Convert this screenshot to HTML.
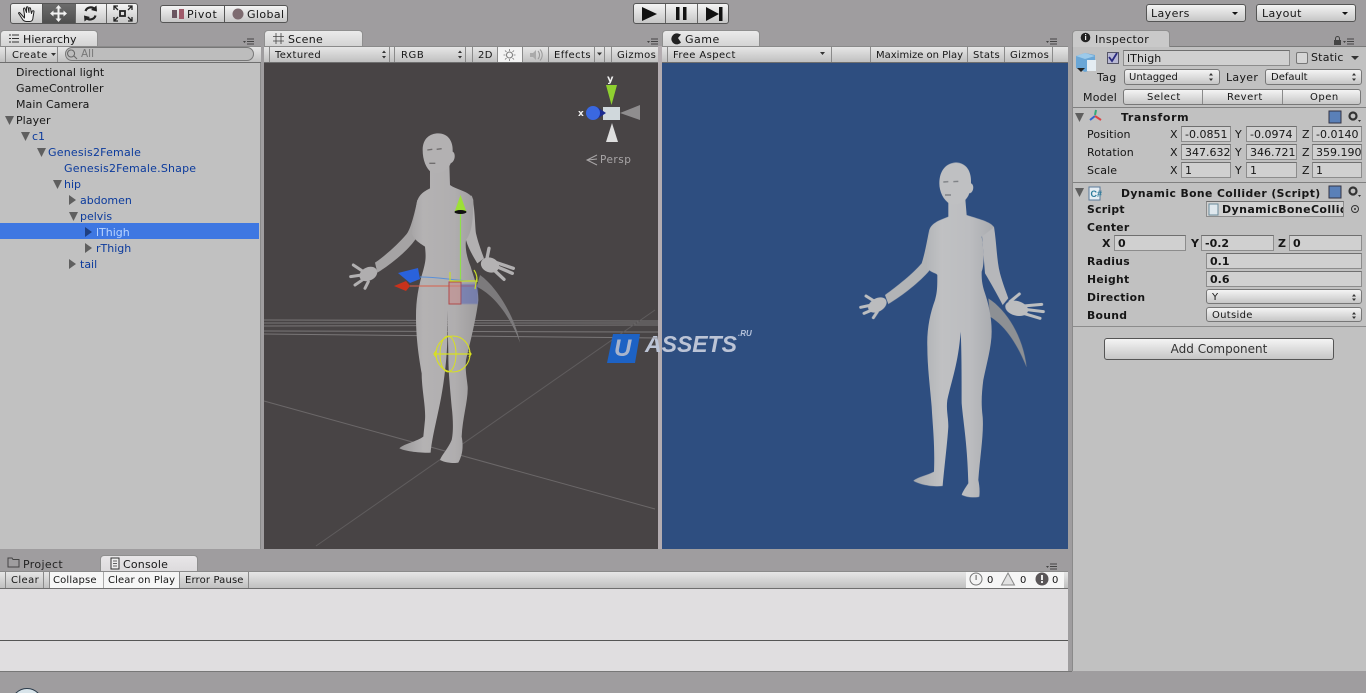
<!DOCTYPE html>
<html><head><meta charset="utf-8"><title>Unity Editor</title>
<style>
html,body{margin:0;padding:0;width:1366px;height:693px;overflow:hidden;background:#9f9d9f}
body{position:relative;font:11px/14px "DejaVu Sans","Liberation Sans",sans-serif;color:#161616}
.a,.t,.f,.b,.tab,.bar{position:absolute;box-sizing:border-box}
.t{white-space:nowrap;margin-top:1px}
.bar{height:17px;background:linear-gradient(#e6e6e6,#c0c0c0);border-bottom:1px solid #6e6e6e;border-top:1px solid #8a8a8a}
.tab{height:17px;border-radius:4px 4px 0 0;background:linear-gradient(#ebebeb,#d2d2d2);border:1px solid #8f8f8f;border-bottom:0}
.b{background:linear-gradient(#f4f4f4,#c6c6c6);border:1px solid #555;border-radius:3px}
.f{background:#d0d0d0;border:1px solid #8c8c8c;border-top-color:#6f6f6f;height:16px;padding-left:3px;padding-top:1px;line-height:14px;white-space:nowrap;overflow:hidden}
.sep{position:absolute;width:1px;background:#8a8a8a}
.blue{color:#0b3a9c}
.bl{font-weight:bold;letter-spacing:.3px}
svg{position:absolute;left:0;top:0}
</style></head><body>

<!-- top toolbar -->
<div class="b" style="left:10px;top:3px;width:128px;height:21px"></div>
<div class="a" style="left:42px;top:4px;width:33px;height:19px;background:linear-gradient(#6c6c6c,#4f4f4f)"></div>
<div class="sep" style="left:42px;top:4px;height:19px;background:#555"></div>
<div class="sep" style="left:75px;top:4px;height:19px;background:#666"></div>
<div class="sep" style="left:106px;top:4px;height:19px;background:#666"></div>
<div class="b" style="left:160px;top:5px;width:128px;height:18px"></div>
<div class="sep" style="left:224px;top:6px;height:16px;background:#555"></div>
<div class="t" style="left:187px;top:7px;letter-spacing:.7px">Pivot</div>
<div class="t" style="left:247px;top:7px;letter-spacing:.4px">Global</div>
<div class="b" style="left:633px;top:3px;width:96px;height:21px"></div>
<div class="sep" style="left:665px;top:4px;height:19px;background:#666"></div>
<div class="sep" style="left:697px;top:4px;height:19px;background:#666"></div>
<div class="b" style="left:1146px;top:4px;width:100px;height:18px"></div>
<div class="t" style="left:1151px;top:6px;letter-spacing:.4px">Layers</div>
<div class="b" style="left:1256px;top:4px;width:100px;height:18px"></div>
<div class="t" style="left:1262px;top:6px;letter-spacing:.4px">Layout</div>

<!-- hierarchy -->
<div class="a" style="left:0;top:46px;width:261px;height:503px;background:#c1c1c1;border-right:1px solid #8a8a8a"></div>
<div class="tab" style="left:0;top:30px;width:98px"></div>
<div class="t" style="left:23px;top:32px;letter-spacing:.05px">Hierarchy</div>
<div class="bar" style="left:0;top:46px;width:261px"></div>
<div class="sep" style="left:5px;top:47px;height:15px"></div>
<div class="sep" style="left:57px;top:47px;height:15px"></div>
<div class="t" style="left:12px;top:48px;font-size:10px;letter-spacing:.4px">Create</div>
<div class="a" style="left:65px;top:47px;width:189px;height:14px;border:1px solid #777;border-radius:7px;background:#bdbdbd"></div>
<div class="t" style="left:81px;top:46px;color:#777;font-size:10.5px">All</div>
<div class="a" style="left:0;top:223px;width:259px;height:16px;background:#3e77e2"></div>
<div class="t" style="left:16px;top:65px;letter-spacing:.05px">Directional light</div>
<div class="t" style="left:16px;top:81px;letter-spacing:.05px">GameController</div>
<div class="t" style="left:16px;top:97px;letter-spacing:.05px">Main Camera</div>
<div class="t" style="left:16px;top:113px;letter-spacing:.05px">Player</div>
<div class="t blue" style="left:32px;top:129px">c1</div>
<div class="t blue" style="left:48px;top:145px;letter-spacing:.2px">Genesis2Female</div>
<div class="t blue" style="left:64px;top:161px;letter-spacing:.2px">Genesis2Female.Shape</div>
<div class="t blue" style="left:64px;top:177px">hip</div>
<div class="t blue" style="left:80px;top:193px">abdomen</div>
<div class="t blue" style="left:80px;top:209px">pelvis</div>
<div class="t" style="left:96px;top:225px;color:#b9d4ff">lThigh</div>
<div class="t blue" style="left:96px;top:241px">rThigh</div>
<div class="t blue" style="left:80px;top:257px">tail</div>

<!-- scene -->
<div class="a" style="left:264px;top:46px;width:394px;height:503px;background:#484445"></div>
<div class="tab" style="left:264px;top:30px;width:99px"></div>
<div class="t" style="left:288px;top:32px;letter-spacing:.3px">Scene</div>
<div class="bar" style="left:264px;top:46px;width:394px"></div>
<div class="t" style="left:275px;top:48px;font-size:10px;letter-spacing:.4px">Textured</div>
<div class="t" style="left:401px;top:48px;font-size:10px;letter-spacing:.6px">RGB</div>
<div class="t" style="left:478px;top:48px;font-size:10px;letter-spacing:.4px">2D</div>
<div class="a" style="left:497px;top:47px;width:25px;height:15px;background:#f3f3f3"></div>
<div class="t" style="left:554px;top:48px;font-size:10px;letter-spacing:.4px">Effects</div>
<div class="t" style="left:617px;top:48px;font-size:10px;letter-spacing:.4px">Gizmos</div>
<div class="sep" style="left:269px;top:47px;height:15px"></div>
<div class="sep" style="left:389px;top:47px;height:15px"></div>
<div class="sep" style="left:394px;top:47px;height:15px"></div>
<div class="sep" style="left:465px;top:47px;height:15px"></div>
<div class="sep" style="left:472px;top:47px;height:15px"></div>
<div class="sep" style="left:497px;top:47px;height:15px"></div>
<div class="sep" style="left:522px;top:47px;height:15px"></div>
<div class="sep" style="left:548px;top:47px;height:15px"></div>
<div class="sep" style="left:594px;top:47px;height:15px"></div>
<div class="sep" style="left:604px;top:47px;height:15px"></div>
<div class="sep" style="left:611px;top:47px;height:15px"></div>
<div class="t" style="left:600px;top:152px;color:#a9a6a7;font-size:10.5px;letter-spacing:.5px">Persp</div>

<!-- divider -->
<div class="a" style="left:658px;top:46px;width:4px;height:503px;background:#b3acb0"></div>

<!-- game -->
<div class="a" style="left:662px;top:46px;width:406px;height:503px;background:#2e4e80"></div>
<div class="tab" style="left:662px;top:30px;width:98px"></div>
<div class="t" style="left:685px;top:32px;letter-spacing:.5px">Game</div>
<div class="bar" style="left:662px;top:46px;width:406px"></div>
<div class="t" style="left:673px;top:48px;font-size:10px;letter-spacing:.4px">Free Aspect</div>
<div class="t" style="left:876px;top:48px;font-size:10px">Maximize on Play</div>
<div class="t" style="left:973px;top:48px;font-size:10px;letter-spacing:.3px">Stats</div>
<div class="t" style="left:1010px;top:48px;font-size:10px;letter-spacing:.4px">Gizmos</div>
<div class="sep" style="left:667px;top:47px;height:15px"></div>
<div class="sep" style="left:831px;top:47px;height:15px"></div>
<div class="sep" style="left:870px;top:47px;height:15px"></div>
<div class="sep" style="left:967px;top:47px;height:15px"></div>
<div class="sep" style="left:1004px;top:47px;height:15px"></div>
<div class="sep" style="left:1052px;top:47px;height:15px"></div>

<!-- inspector -->
<div class="a" style="left:1072px;top:46px;width:294px;height:625px;background:#c1c1c1;border-left:1px solid #8a8a8a;border-top:1px solid #7a7a7a"></div>
<div class="tab" style="left:1072px;top:30px;width:98px;background:#c9c9c9"></div>
<div class="t" style="left:1095px;top:32px;letter-spacing:.3px">Inspector</div>
<div class="f" style="left:1123px;top:50px;width:167px;height:16px;letter-spacing:.1px">lThigh</div>
<div class="a" style="left:1107px;top:52px;width:12px;height:12px;background:#b9b9d4;border:1px solid #556"></div>
<div class="a" style="left:1296px;top:52px;width:12px;height:12px;background:#d6d6d6;border:1px solid #777;border-radius:2px"></div>
<div class="t" style="left:1311px;top:50px;letter-spacing:.2px">Static</div>
<div class="t" style="left:1097px;top:70px;letter-spacing:.3px">Tag</div>
<div class="b" style="left:1124px;top:69px;width:96px;height:16px;border-color:#777"></div>
<div class="t" style="left:1129px;top:70px;font-size:10px">Untagged</div>
<div class="t" style="left:1226px;top:70px;letter-spacing:.3px">Layer</div>
<div class="b" style="left:1265px;top:69px;width:97px;height:16px;border-color:#777"></div>
<div class="t" style="left:1271px;top:70px;font-size:10px">Default</div>
<div class="t" style="left:1083px;top:90px;letter-spacing:.2px">Model</div>
<div class="b" style="left:1123px;top:89px;width:238px;height:16px;border-color:#777"></div>
<div class="sep" style="left:1202px;top:90px;height:14px"></div>
<div class="sep" style="left:1282px;top:90px;height:14px"></div>
<div class="t" style="left:1147px;top:90px;font-size:10px;letter-spacing:.5px">Select</div>
<div class="t" style="left:1227px;top:90px;font-size:10px;letter-spacing:.5px">Revert</div>
<div class="t" style="left:1310px;top:90px;font-size:10px;letter-spacing:.5px">Open</div>
<div class="a" style="left:1073px;top:107px;width:293px;height:1px;background:#808080"></div>
<div class="t" style="left:1121px;top:110px;font-weight:bold;letter-spacing:.6px">Transform</div>
<div class="t" style="left:1087px;top:127px;letter-spacing:.1px">Position</div>
<div class="t" style="left:1087px;top:145px;letter-spacing:.1px">Rotation</div>
<div class="t" style="left:1087px;top:163px;letter-spacing:.1px">Scale</div>
<div class="t" style="left:1170px;top:127px">X</div><div class="t" style="left:1235px;top:127px">Y</div><div class="t" style="left:1302px;top:127px">Z</div>
<div class="t" style="left:1170px;top:145px">X</div><div class="t" style="left:1235px;top:145px">Y</div><div class="t" style="left:1302px;top:145px">Z</div>
<div class="t" style="left:1170px;top:163px">X</div><div class="t" style="left:1235px;top:163px">Y</div><div class="t" style="left:1302px;top:163px">Z</div>
<div class="f" style="left:1181px;top:126px;width:50px">-0.0851</div>
<div class="f" style="left:1246px;top:126px;width:51px">-0.0974</div>
<div class="f" style="left:1312px;top:126px;width:50px">-0.0140</div>
<div class="f" style="left:1181px;top:144px;width:50px">347.632</div>
<div class="f" style="left:1246px;top:144px;width:51px">346.721</div>
<div class="f" style="left:1312px;top:144px;width:50px">359.190</div>
<div class="f" style="left:1181px;top:162px;width:50px">1</div>
<div class="f" style="left:1246px;top:162px;width:51px">1</div>
<div class="f" style="left:1312px;top:162px;width:50px">1</div>
<div class="a" style="left:1073px;top:182px;width:293px;height:1px;background:#808080"></div>
<div class="t" style="left:1121px;top:186px;font-weight:bold;font-size:10.8px;letter-spacing:.42px">Dynamic Bone Collider (Script)</div>
<div class="t bl" style="left:1087px;top:202px;font-size:10.8px">Script</div>
<div class="f" style="left:1206px;top:201px;width:138px;padding-left:15px;font-weight:bold;letter-spacing:.4px">DynamicBoneCollider</div>
<div class="t bl" style="left:1087px;top:220px;font-size:10.8px">Center</div>
<div class="t" style="left:1102px;top:236px;font-weight:bold">X</div>
<div class="f" style="left:1114px;top:235px;width:72px;font-weight:bold">0</div>
<div class="t" style="left:1191px;top:236px;font-weight:bold">Y</div>
<div class="f" style="left:1201px;top:235px;width:73px;font-weight:bold">-0.2</div>
<div class="t" style="left:1278px;top:236px;font-weight:bold">Z</div>
<div class="f" style="left:1289px;top:235px;width:73px;font-weight:bold">0</div>
<div class="t bl" style="left:1087px;top:254px;font-size:10.8px">Radius</div>
<div class="f" style="left:1206px;top:253px;width:156px;font-weight:bold">0.1</div>
<div class="t bl" style="left:1087px;top:272px;font-size:10.8px">Height</div>
<div class="f" style="left:1206px;top:271px;width:156px;font-weight:bold">0.6</div>
<div class="t bl" style="left:1087px;top:290px;font-size:10.8px">Direction</div>
<div class="b" style="left:1206px;top:289px;width:156px;height:15px;border-color:#777"></div>
<div class="t" style="left:1212px;top:290px;font-size:10px">Y</div>
<div class="t bl" style="left:1087px;top:308px;font-size:10.8px">Bound</div>
<div class="b" style="left:1206px;top:307px;width:156px;height:15px;border-color:#777"></div>
<div class="t" style="left:1212px;top:308px;font-size:10px;letter-spacing:.3px">Outside</div>
<div class="a" style="left:1073px;top:326px;width:293px;height:1px;background:#8c8c8c"></div>
<div class="b" style="left:1104px;top:338px;width:230px;height:22px;text-align:center;line-height:20px;font-size:12px;color:#333">Add Component</div>

<!-- console -->
<div class="a" style="left:0;top:571px;width:1068px;height:100px;background:#e0dee0"></div>
<div class="a" style="left:0;top:671px;width:1072px;height:1px;background:#777"></div>
<div class="t" style="left:23px;top:557px;letter-spacing:.35px;color:#222">Project</div>
<div class="tab" style="left:100px;top:555px;width:98px;background:linear-gradient(#e8e6e8,#dcdadc)"></div>
<div class="t" style="left:123px;top:557px;letter-spacing:.2px">Console</div>
<div class="bar" style="left:0;top:571px;width:1068px;height:18px"></div>
<div class="a" style="left:49px;top:572px;width:54px;height:16px;background:#f6f6f6"></div>
<div class="a" style="left:103px;top:572px;width:76px;height:16px;background:#f6f6f6"></div>
<div class="a" style="left:966px;top:572px;width:98px;height:16px;background:#f6f6f6"></div>
<div class="t" style="left:11px;top:573px;font-size:10px;letter-spacing:.4px">Clear</div>
<div class="t" style="left:53px;top:573px;font-size:10px;letter-spacing:.15px">Collapse</div>
<div class="t" style="left:108px;top:573px;font-size:10px;letter-spacing:.1px">Clear on Play</div>
<div class="t" style="left:185px;top:573px;font-size:10px;letter-spacing:.15px">Error Pause</div>
<div class="t" style="left:987px;top:573px;font-size:10px">0</div>
<div class="t" style="left:1020px;top:573px;font-size:10px">0</div>
<div class="t" style="left:1052px;top:573px;font-size:10px">0</div>
<div class="sep" style="left:5px;top:572px;height:16px"></div>
<div class="sep" style="left:43px;top:572px;height:16px"></div>
<div class="sep" style="left:49px;top:572px;height:16px"></div>
<div class="sep" style="left:103px;top:572px;height:16px;background:#aaa"></div>
<div class="sep" style="left:179px;top:572px;height:16px"></div>
<div class="sep" style="left:248px;top:572px;height:16px"></div>
<div class="a" style="left:0;top:640px;width:1068px;height:1px;background:#555"></div>

<!-- watermark -->
<div class="t" style="left:645px;top:330px;font:italic bold 23px/26px 'Liberation Sans',sans-serif;color:#bcc4d6">ASSETS</div>
<div class="t" style="left:738px;top:328px;font:italic bold 8px/10px 'Liberation Sans',sans-serif;color:#b5c2da">.RU</div>

<svg width="1366" height="693" viewBox="0 0 1366 693">
<defs>
<filter id="bl" x="-5%" y="-5%" width="110%" height="110%"><feGaussianBlur stdDeviation=".45"/></filter>
<linearGradient id="sk" x1="0" x2="1" y1="0" y2="0"><stop offset="0" stop-color="#9a9899"/><stop offset=".3" stop-color="#b4b2b3"/><stop offset=".7" stop-color="#b0aeaf"/><stop offset="1" stop-color="#9d9b9c"/></linearGradient>
<linearGradient id="sk2" x1="0" x2="1" y1="0" y2="0"><stop offset="0" stop-color="#a8abaf"/><stop offset=".35" stop-color="#c0c1c3"/><stop offset=".7" stop-color="#bcbdc0"/><stop offset="1" stop-color="#a9abaf"/></linearGradient>
</defs>

<!-- toolbar icons -->
<path d="M20 13c-1-1-2 0-1 1l4 6c1 1 2 1.500 3 1.500h4c2 0 3-2 3-4l1-6c0-1-1.500-1-2 0l-.5 2-1-5c0-1-1.500-1-1.500 0l0 4-1-5c0-1-1.500-1-1.500 0l0 5-1.500-4c0-1-1.500-.5-1.500.5l1 6v3z" fill="#f2f2f2" stroke="#222" stroke-width="1" stroke-linejoin="round"/>
<path d="M85.500 11A5.500 5.500 0 0 1 95 9.500M95.500 15.500A5.500 5.500 0 0 1 86 17.500" fill="none" stroke="#222" stroke-width="2.200"/>
<path d="M96.500 5.500l.5 6-6-1.500zM84.500 21.500l-.5-6 6 1.500z" fill="#222"/>
<g fill="none" stroke="#222" stroke-width="1.300">
<rect x="120" y="11" width="5" height="5" stroke-width="1.800"/>
<path d="M114 10l0-4 4 0M114 6l4 4M132 10l0-4-4 0M132 6l-4 4M114 17l0 4 4 0M114 21l4-4M132 17l0 4-4 0M132 21l-4-4"/>
</g>
<path d="M58.500 5l3 3.500h-2v4h4v-2l3.500 3-3.500 3v-2h-4v4h2l-3 3.500-3-3.500h2v-4h-4v2l-3.500-3 3.500-3v2h4v-4h-2z" fill="#f2f2f2"/>
<rect x="172" y="10" width="5" height="8" fill="#6a5560"/><rect x="179" y="9" width="5" height="10" fill="#a05a6a"/>
<circle cx="238" cy="14" r="5.500" fill="#7d6b70"/>
<path d="M642 7l15 7-15 7z" fill="#111"/>
<rect x="676" y="7" width="3.500" height="13" fill="#111"/><rect x="683" y="7" width="3.500" height="13" fill="#111"/>
<path d="M706 7l13 7-13 7z" fill="#111"/><rect x="719" y="7" width="3.500" height="14" fill="#111"/>
<path d="M1232 12h6l-3 3zM1342 12h6l-3 3z" fill="#111"/>

<!-- tabs icons -->
<path d="M9 35h2M12 35h7M9 38.500h2M12 38.500h7M9 42h2M12 42h7" stroke="#333" stroke-width="1" fill="none"/>
<path d="M276 33v11M281 33v11M273 36.500h11M273 41h11" stroke="#444" stroke-width=".8" fill="none"/>
<path d="M678 33.500a5.500 5.500 0 1 0 3 9l-3-4.500 3-3.500z" fill="#222"/>
<circle cx="1085.500" cy="37.500" r="4.800" fill="#222"/><rect x="1085" y="36" width="1.200" height="4" fill="#eee"/><rect x="1085" y="34" width="1.200" height="1.200" fill="#eee"/>
<g id="mn" fill="#444"><path d="M243 41h3l-1.500 2z"/><rect x="247" y="38.500" width="7" height="1"/><rect x="247" y="41" width="7" height="1"/><rect x="247" y="43.500" width="7" height="1"/></g>
<use href="#mn" x="404"/><use href="#mn" x="803"/><use href="#mn" x="1100"/><use href="#mn" x="803" y="525"/>
<rect x="1334" y="40" width="7" height="5" fill="#444"/><path d="M1335.500 40v-1.500a2 2 0 0 1 4 0v1.500" stroke="#444" fill="none"/>
<path d="M71 50a3.500 3.500 0 1 0 .1 0M74 56l3 3" stroke="#666" fill="none"/>
<path d="M51 53h5l-2.500 3z" fill="#333"/>
<path d="M8 558h4l1 1.500h6v7.500h-11z" fill="none" stroke="#444"/>
<rect x="111" y="558" width="8" height="11" fill="#eee" stroke="#333"/><path d="M113 561h4M113 563.500h4M113 566h4" stroke="#333" stroke-width=".7"/>

<!-- tree triangles -->
<g fill="#5f5f5f">
<path d="M5 116h9l-4.500 9z"/><path d="M21 132h9l-4.500 9z"/><path d="M37 148h9l-4.500 9z"/><path d="M53 180h9l-4.500 9z"/><path d="M69 212h9l-4.500 9z"/>
<path d="M69 195v10l7-5z"/><path d="M69 259v10l7-5z"/><path d="M85 243v10l7-5z"/>
<path d="M1075 113h9l-4.500 9z"/><path d="M1075 188h9l-4.500 9z"/>
</g>
<path d="M85 227v10l7-5z" fill="#1f3f80"/>

<!-- dropdown marks -->
<g fill="#333">
<path d="M384 50.500l2 2.500h-4zM384 58.500l2-2.500h-4zM460 50.500l2 2.500h-4zM460 58.500l2-2.500h-4z"/>
<path d="M597 52.500h5l-2.500 3zM820 52h5l-2.500 3z"/>
<path d="M1211 73l2 2.500h-4zM1211 81l2-2.500h-4zM1354 73l2 2.500h-4zM1354 81l2-2.500h-4zM1354 294l2 2.500h-4zM1354 301l2-2.500h-4zM1354 312l2 2.500h-4zM1354 319l2-2.500h-4z"/>
<path d="M1351 56h8l-4 4z"/>
</g>
<path d="M1109 57l3 4 5-8" stroke="#2b2b80" stroke-width="1.800" fill="none"/>
<circle cx="509.500" cy="55" r="3" fill="none" stroke="#777"/><path d="M509.500 49v2M509.500 59v2M503.500 55h2M513.500 55h2M505 50.500l1.500 1.500M514 50.500l-1.500 1.500M505 59.500l1.500-1.500M514 59.500l-1.500-1.500" stroke="#777" stroke-width=".8"/>
<path d="M530 53h3l3-3v10l-3-3h-3z" fill="#aaa"/><path d="M538 51a6 6 0 0 1 0 8M540 49.500a8 8 0 0 1 0 11" stroke="#999" fill="none"/>

<!-- inspector icons -->
<path d="M1076 56l9-3 10 2v14l-10 3-9-4z" fill="#6aa6d6"/><path d="M1076 56l9 3 10-3-10-3z" fill="#9ccaea"/><rect x="1087" y="60" width="9" height="11" fill="#e4ecf2"/><path d="M1077 68h8l-4 4z" fill="#222"/>
<path d="M1096 110l-1 5" stroke="#3a7" stroke-width="2"/><path d="M1095 116l-5 4" stroke="#36c" stroke-width="2"/><path d="M1095 116l6 4" stroke="#d44" stroke-width="2"/>
<rect x="1329" y="111" width="12" height="12" fill="#5a80b8" stroke="#334"/><rect x="1329" y="186" width="12" height="12" fill="#5a80b8" stroke="#334"/>
<g fill="#333"><circle cx="1353" cy="116" r="3.500" fill="none" stroke="#333" stroke-width="2.200"/><path d="M1358 120h3l-1.500 2z"/><circle cx="1353" cy="191" r="3.500" fill="none" stroke="#333" stroke-width="2.200"/><path d="M1358 195h3l-1.500 2z"/></g>
<rect x="1089" y="187" width="11" height="13" fill="#e6eef4" stroke="#5a7a9a"/><text x="1090.500" y="197" font-family="Liberation Sans" font-size="9" font-weight="bold" fill="#2a7a9a">C#</text>
<rect x="1209" y="204" width="9" height="11" fill="#dfe8ee" stroke="#6a8a9a"/>
<circle cx="1355" cy="209" r="3.500" fill="none" stroke="#333"/><circle cx="1355" cy="209" r="1" fill="#333"/>
<circle cx="976" cy="579" r="6" fill="#f4f4f4" stroke="#777"/><rect x="975.500" y="575" width="1.200" height="5" fill="#777"/>
<path d="M1008 573l6.500 12h-13z" fill="#e2e2e2" stroke="#888"/>
<circle cx="1042" cy="579" r="6.500" fill="#5a5658"/><rect x="1041" y="575" width="2" height="5" fill="#eee"/><rect x="1041" y="581" width="2" height="2" fill="#eee"/>

<!-- scene grid -->
<g stroke="#8f8c8d" fill="none" stroke-width="1" opacity=".7">
<path d="M264 320l394 1M264 323l394 0M264 326l394-1M264 331l394 1M264 334l394 4"/>
<path d="M264 401L655 509" stroke="#7a7778"/><path d="M316 546L655 310" stroke="#6a6768"/>
</g>

<!-- scene figure: plain grey mannequin -->
<g transform="translate(340 120) scale(.3333)" filter="url(#bl)">
<path d="M420 465C470 500 525 590 540 668C515 600 470 530 410 500Z" fill="#7c7a7b"/>
<g fill="none" stroke="#b2b0b1" stroke-width="9" stroke-linecap="round">
<path d="M70 455L40 435M65 465L32 470M70 478L45 495M85 485L75 505"/>
<path d="M470 428L520 445M470 440L517 460M462 450L492 478M440 420L447 385" stroke-width="10"/>
</g>
<ellipse cx="85" cy="462" rx="28" ry="20" transform="rotate(-25 85 462)" fill="#b0aeaf"/>
<ellipse cx="450" cy="435" rx="28" ry="22" transform="rotate(20 450 435)" fill="#b4b2b3"/>
<path d="M232 240C222 290 210 330 200 342C175 372 130 412 105 428L112 458C150 435 200 395 225 360C245 330 250 280 250 250Z" fill="#a5a3a4"/>
<path d="M395 225C405 260 405 320 408 340C415 370 425 395 432 415L412 430C400 410 385 385 378 360Z" fill="#b2b0b1"/>
<path d="M270 140L328 130L330 195C350 210 395 215 400 240C400 300 395 340 378 360C375 385 380 410 392 440C400 470 415 500 415 540C410 590 390 670 378 720C375 750 380 770 383 800C385 840 368 890 365 950C372 985 365 1010 355 1028C345 1030 320 1030 300 1020C305 1005 325 985 335 960C340 940 340 900 335 860C330 800 325 760 325 700L322 570L322 660C320 730 310 800 300 850C290 900 275 960 272 998C250 1000 195 995 178 985C195 970 230 965 250 950L255 900C258 860 245 810 245 760C238 720 228 660 228 590C228 540 235 500 250 450C258 420 258 410 255 380C250 375 225 365 215 340L230 250C235 225 250 215 270 205Z" fill="url(#sk)"/>
<path d="M248 90C248 55 270 40 295 40C325 40 340 65 338 95C348 100 346 125 332 130C325 150 300 165 275 158C258 145 248 120 248 90Z" fill="#b3b1b2"/>
<path d="M262 90l15-2M290 88l15-2M268 130h18" stroke="#6f6d6e" stroke-width="4" fill="none"/>
</g>

<!-- move gizmo -->
<g fill="none">
<path d="M460.500 213V280" stroke="#8fe04a" stroke-width="1.200"/>
<path d="M460.500 195l-6 17h12z" fill="#9de036"/><ellipse cx="460.500" cy="212" rx="6" ry="2" fill="#111"/>
<path d="M400 286H477" stroke="#d8604a" stroke-width="1"/>
<path d="M394 286l12-5 4 5-4 5z" fill="#c8321c"/>
<path d="M398 273l20-5 2 11-10 4z" fill="#2a62dc"/>
<path d="M420 277C440 277 450 280 470 281" stroke="#5a90d8" stroke-width="1"/>
<rect x="449" y="282" width="12" height="22" fill="#c98a8a" fill-opacity=".55" stroke="#b04a4a"/>
<rect x="461" y="284" width="17" height="20" fill="#5060b8" fill-opacity=".5" filter="url(#bl)"/>
<path d="M450 281H477M477 277l-2 12M474 270C477 274 477 278 477 282M450 272V281" stroke="#c8dc28" stroke-width="1.200"/>
<ellipse cx="453" cy="354" rx="17" ry="18" stroke="#d8e020" stroke-width="1.100"/>
<ellipse cx="448" cy="354" rx="8" ry="18" stroke="#d8e020" stroke-width="1"/>
<path d="M435 354H471M436 351l-2 3 2 3M469 351l2 3-2 3" stroke="#d8e020" stroke-width="1.300"/>
</g>

<!-- view gizmo -->
<path d="M606 85h11l-5.500 20z" fill="#8fd030"/>
<path d="M620 113l20-8v15z" fill="#8f8d8e"/>
<path d="M612 123l-6 19h12z" fill="#dedede"/>
<rect x="603" y="107" width="17" height="13" fill="#d0d8dc"/>
<path d="M606 113l-9-6v12z" fill="#1a2a90"/>
<circle cx="593" cy="113" r="7" fill="#3a68e0"/>
<text x="607" y="82" font-family="DejaVu Sans" font-size="10" font-weight="bold" fill="#f0f0f0">y</text>
<text x="578" y="116" font-family="DejaVu Sans" font-size="9" font-weight="bold" fill="#f0f0f0">x</text>
<path d="M597 155l-10 5 10 5M597 159l-9 1" stroke="#a9a6a7" fill="none"/>

<!-- game figure: plain grey mannequin -->
<g transform="translate(850 150) scale(.3333)" filter="url(#bl)">
<path d="M415 445C470 480 520 560 530 652C505 590 470 530 420 500Z" fill="#8d9094"/>
<g fill="none" stroke="#bcbec0" stroke-width="9" stroke-linecap="round">
<path d="M75 455L48 438M65 465L32 472M70 478L42 490M82 485L70 503"/>
<path d="M520 468L575 463M525 478L580 485M520 490L570 505M480 455L508 432"/>
</g>
<ellipse cx="82" cy="465" rx="30" ry="20" transform="rotate(-30 82 465)" fill="#bbbcbe"/>
<ellipse cx="500" cy="475" rx="35" ry="22" transform="rotate(15 500 475)" fill="#bcbdbf"/>
<path d="M238 238C228 290 222 320 215 340C190 370 140 410 105 435L115 462C160 435 210 395 238 362Z" fill="#b2b4b6"/>
<path d="M395 245L432 230C440 280 440 330 450 370C458 400 468 425 475 445L458 465C440 430 420 395 405 370Z" fill="#b6b7ba"/>
<path d="M295 145L345 135L350 195C380 205 425 215 432 232L395 260C400 290 405 340 395 365C395 385 395 400 405 430C415 460 425 500 425 545C425 590 410 640 400 690C395 730 393 760 398 800C402 850 390 920 385 990C388 1005 390 1020 388 1040C375 1045 350 1042 335 1035C338 1025 345 1015 355 1000C352 880 340 820 335 760C335 700 335 600 332 545C325 640 305 690 292 750C288 780 295 800 295 830C292 880 282 960 278 1008C250 1012 205 1003 190 992C205 980 235 975 252 965C255 880 248 830 245 770C240 710 232 650 232 590C230 540 240 490 255 450C262 425 262 410 262 375C258 368 245 370 232 355C228 330 235 290 238 240C245 218 270 210 295 200Z" fill="url(#sk2)"/>
<path d="M268 100C268 60 290 38 318 38C350 38 365 65 363 100C375 105 370 130 358 130C350 155 325 168 300 162C280 150 268 125 268 100Z" fill="#bfc0c2"/>
<path d="M280 96l15-1M310 95l15-1M285 135h18" stroke="#7b7e82" stroke-width="4" fill="none"/>
</g>

<!-- watermark logo -->
<path d="M613 334h27l-5 29h-28z" fill="#1d62c4"/>
<text x="614" y="356" font-family="Liberation Sans" font-size="24" font-weight="bold" font-style="italic" fill="#a8b4cc">U</text>
</svg>

<div class="a" style="left:11px;top:688px;width:32px;height:32px;border-radius:50%;background:#d8e4ea;border:1px solid #2a3a4a"></div>
</body></html>
